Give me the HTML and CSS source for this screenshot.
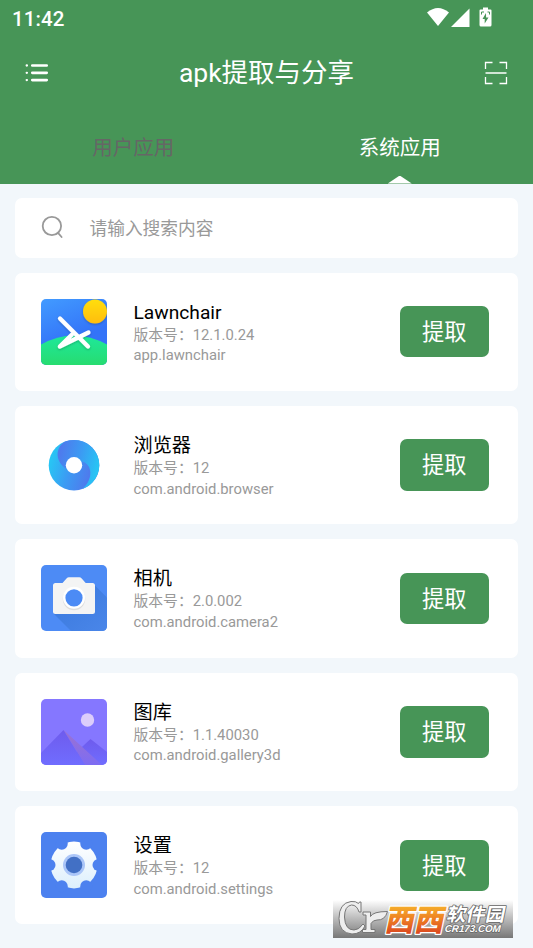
FILE: index.html
```html
<!DOCTYPE html>
<html lang="zh-CN">
<head>
<meta charset="utf-8">
<meta name="viewport" content="width=device-width">
<title>apk提取与分享</title>
<link rel="stylesheet" href="styles.css">
</head>
<body>
<header class="header">
  <div class="status">
    <span class="clock">11:42</span>
    <svg class="status-icons" width="66" height="22" viewBox="0 0 66 22" fill="#fff">
      <path d="M0 5.500Q11 -3.500 22 5.500L11 19Z"/>
      <path d="M42.500 1.500V20H24Z"/>
      <path fill-rule="evenodd" d="M56 .5h5v2h2.500q1 0 1 1V18q0 1.500-1.500 1.500h-9q-1.500 0-1.500-1.500V3.500q0-1 1-1H56ZM59 6l-3.500 6h2.200v4.500L61.500 10.500h-2.400Z"/>
      <path stroke="#479557" stroke-width="1" d="M54.500 7.500V5H57M60.500 5H62.500V7.500" fill="none"/>
    </svg>
  </div>
  <div class="toolbar">
    <svg width="24" height="20" viewBox="0 0 24 20" fill="none" stroke="#fff" stroke-width="2.700" stroke-linecap="round"><path d="M7.300 2.500H21.700M7.300 9.800H21.700M7.300 17.100H21.700"/><path stroke-width="2.300" d="M1.700 2.500h.2M1.700 9.800h.2M1.700 17.100h.2"/></svg>
    <h1 class="title">apk提取与分享</h1>
    <svg width="24" height="24" viewBox="0 0 24 24" fill="none" stroke="#fff" stroke-width="1.300"><path d="M1.500 8V1.500H8.500M15.500 1.500H22.500V8M1.500 16V22.500H8.500M15.500 22.500H22.500V16M1.500 12H22.500"/></svg>
  </div>
  <nav class="tabs">
    <div class="tab">用户应用</div>
    <div class="tab active">系统应用</div>
  </nav>
</header>
<main class="list">
  <div class="search">
    <svg width="24" height="24" viewBox="0 0 24 24" fill="none" stroke="#999" stroke-width="1.800" stroke-linecap="round"><circle cx="10.900" cy="11" r="9.200"/><path d="M16.800 17.700L20.600 22"/></svg>
    <span>请输入搜索内容</span>
  </div>

  <article class="card">
    <svg class="icon" viewBox="0 0 66 66">
      <defs>
        <linearGradient id="sky" x1="0" y1="0" x2=".4" y2="1"><stop stop-color="#429bff"/><stop offset=".7" stop-color="#3373f8"/></linearGradient>
        <linearGradient id="grass" x1="0" y1="0" x2="0" y2="1"><stop stop-color="#1ee89b"/><stop offset="1" stop-color="#27dc70"/></linearGradient>
        <linearGradient id="sun" x1="0" y1="0" x2="0" y2="1"><stop stop-color="#ffde08"/><stop offset="1" stop-color="#ffbd0b"/></linearGradient>
        <clipPath id="tile"><rect width="66" height="66" rx="5"/></clipPath>
        <filter id="soft" x="-30%" y="-30%" width="160%" height="160%"><feDropShadow dx="0" dy="1" stdDeviation="1" flood-opacity=".25"/></filter>
      </defs>
      <g clip-path="url(#tile)">
        <rect width="66" height="66" fill="url(#sky)"/>
        <path d="M0 45.500Q33 27.500 66 45.500V66H0Z" fill="url(#grass)"/>
        <circle cx="54" cy="12.500" r="12" fill="url(#sun)" filter="url(#soft)"/>
        <g fill="none" stroke="#fff" stroke-width="4.200" stroke-linecap="round" stroke-linejoin="round" filter="url(#soft)"><path d="M47.500 33.500L18.800 47.500L31 35.500"/><path d="M19 19.500L47 47.500"/></g>
      </g>
    </svg>
    <div class="info"><h2>Lawnchair</h2><p>版本号：12.1.0.24</p><p>app.lawnchair</p></div>
    <button class="extract">提取</button>
  </article>

  <article class="card">
    <svg class="icon" viewBox="0 0 66 66">
      <defs>
        <linearGradient id="swirlTop" gradientUnits="userSpaceOnUse" x1="18" y1="24" x2="57" y2="34"><stop stop-color="#4e7bed"/><stop offset=".5" stop-color="#3c9af3"/><stop offset="1" stop-color="#28c4f4"/></linearGradient>
        <linearGradient id="swirlBottom" gradientUnits="userSpaceOnUse" x1="9" y1="32" x2="48" y2="43"><stop stop-color="#28c4f4"/><stop offset=".5" stop-color="#3c9af3"/><stop offset="1" stop-color="#4e7bed"/></linearGradient>
      </defs>
      <circle cx="33" cy="33.200" r="25.300" fill="url(#swirlBottom)"/>
      <path d="M33 7.900A25.300 25.300 0 0 1 41.300 57.100C47 52 50.500 45 49 38Q47.500 31 41 29.500L33 33.200L25 37Q18.500 32 17 26C15.500 19 18.500 12.500 24.700 9.300A25.300 25.300 0 0 1 33 7.900Z" fill="url(#swirlTop)"/>
      <circle cx="33" cy="33.200" r="8.200" fill="#fff"/>
    </svg>
    <div class="info"><h2>浏览器</h2><p>版本号：12</p><p>com.android.browser</p></div>
    <button class="extract">提取</button>
  </article>

  <article class="card">
    <svg class="icon" viewBox="0 0 66 66">
      <defs><linearGradient id="cast" x1="0" y1="0" x2="1" y2="1"><stop stop-color="#3978dc"/><stop offset="1" stop-color="#4a86e9"/></linearGradient></defs>
      <rect width="66" height="66" rx="5" fill="#4d8bf5"/>
      <path d="M53 19.500L66 32.500V61q0 5-5 5H30L13 49Z" fill="url(#cast)"/>
      <path d="M14.500 18H21.500L25.500 13.500Q26.500 12.300 28 12.300H38.200Q39.700 12.300 40.700 13.500L44.700 18H51.500Q54 18 54 20.500V46.500Q54 49 51.500 49H14.500Q12 49 12 46.500V20.500Q12 18 14.500 18Z" fill="#f4f4f4"/>
      <circle cx="33" cy="34" r="11.200" fill="#dedede"/><circle cx="33" cy="32.800" r="11" fill="#fff"/><circle cx="33" cy="32.800" r="8.600" fill="#4c8bf5"/>
    </svg>
    <div class="info"><h2>相机</h2><p>版本号：2.0.002</p><p>com.android.camera2</p></div>
    <button class="extract">提取</button>
  </article>

  <article class="card">
    <svg class="icon" viewBox="0 0 66 66">
      <defs>
        <linearGradient id="peak" x1="0" y1="0" x2="0" y2="1"><stop stop-color="#6e5bed"/><stop offset="1" stop-color="#706dff"/></linearGradient>
        <linearGradient id="ridge" x1="0" y1="0" x2="0" y2="1"><stop stop-color="#9c72d0"/><stop offset="1" stop-color="#7d6cf3"/></linearGradient>
      </defs>
      <g clip-path="url(#tile)">
        <rect width="66" height="66" fill="#8577ff"/>
        <circle cx="46.500" cy="21" r="6.700" fill="#dccdfb"/>
        <path d="M28 66V60L49.500 40L66 53V66Z" fill="url(#peak)"/>
        <path d="M22.500 31L61 66H44Z" fill="url(#ridge)"/>
        <path d="M0 54L22.500 31L44 66H0Z" fill="url(#peak)"/>
      </g>
    </svg>
    <div class="info"><h2>图库</h2><p>版本号：1.1.40030</p><p>com.android.gallery3d</p></div>
    <button class="extract">提取</button>
  </article>

  <article class="card">
    <svg class="icon" viewBox="0 0 66 66">
      <defs><linearGradient id="gear" x1="0" y1="0" x2="0" y2="1"><stop stop-color="#fff"/><stop offset="1" stop-color="#dceffc"/></linearGradient></defs>
      <rect width="66" height="66" rx="5" fill="#4c81ef"/>
      <circle cx="33" cy="33" r="23.400" fill="url(#gear)"/>
      <g fill="#4c81ef"><circle cx="57.500" cy="33" r="6"/><circle cx="45.250" cy="54.200" r="6"/><circle cx="20.750" cy="54.200" r="6"/><circle cx="8.500" cy="33" r="6"/><circle cx="20.750" cy="11.800" r="6"/><circle cx="45.250" cy="11.800" r="6"/></g>
      <circle cx="33" cy="33" r="11" fill="#abc6f8"/><circle cx="33" cy="33" r="8.300" fill="#4270c5"/>
    </svg>
    <div class="info"><h2>设置</h2><p>版本号：12</p><p>com.android.settings</p></div>
    <button class="extract">提取</button>
  </article>
</main>
<div class="watermark">
  <svg width="180" height="38" viewBox="0 0 180 38">
    <defs>
      <linearGradient id="shade" x1="0" y1="0" x2="0" y2="1"><stop stop-color="#fff"/><stop offset=".45" stop-color="#c0c0c0"/><stop offset="1" stop-color="#777"/></linearGradient>
      <linearGradient id="orange" x1="0" y1="0" x2="0" y2="1"><stop offset=".2" stop-color="#f6b42c"/><stop offset=".5" stop-color="#ef8424"/><stop offset=".85" stop-color="#dc4a20"/></linearGradient>
    </defs>
    <rect width="180" height="38" fill="url(#shade)"/>
    <g stroke="#777" stroke-width="1" fill="#eee" stroke-linejoin="round">
      <path d="M28 2V12H26Q24 5 18.500 5Q11.500 6 11.500 17Q12 30 21 30Q26 30 30 24L32 26Q28 34 19 34Q6 33 6 18.500Q6 3 18 1.500Q23 1 25.500 3.500L26.500 2Z"/>
      <path d="M30 12H37.500V16.500Q40 11.500 54.500 11.500Q52 20.500 44 20Q40 20 38 23.500V29.500H42V32.500H29.500V29.500H33V15H30Z"/>
    </g>
    <g class="brand" transform="translate(51 30.500) skewX(-12)"><text textLength="59" lengthAdjust="spacingAndGlyphs">西西</text></g>
    <g class="product" transform="translate(113 21) skewX(-12)"><text textLength="58" lengthAdjust="spacingAndGlyphs">软件园</text></g>
    <g class="domain" transform="translate(111.500 32) skewX(-5)"><text textLength="56" lengthAdjust="spacingAndGlyphs">CR173.COM</text></g>
  </svg>
</div>
</body>
</html>
```
FILE: styles.css
```css
* { box-sizing: border-box; }
body {
  margin: 0;
  height: 948px;
  overflow: hidden;
  position: relative;
  background: #f2f7fb;
  font-family: Roboto, "Noto Sans CJK SC", sans-serif;
}
svg { display: block; flex: none; }
h1, h2, p { margin: 0; font-weight: 400; }

.header { height: 183.5px; background: #479557; color: #fff; }
.status {
  height: 36px;
  padding: 0 40px 0 12px;
  display: flex;
  align-items: center;
  justify-content: space-between;
}
.clock { padding-top: 1px; font-size: 20.5px; font-weight: 500; line-height: 36px; letter-spacing: .1px; }
.status-icons { margin-top: -1px; }
.toolbar {
  height: 73px;
  padding: 0 25px;
  display: flex;
  align-items: center;
  justify-content: space-between;
}
.title { padding-top: 1px; font-size: 26.5px; line-height: 36px; }
.tabs { height: 74.5px; display: flex; }
.tab {
  flex: 1;
  position: relative;
  text-align: center;
  font-size: 20.5px;
  line-height: 79px;
  height: 74.5px;
  color: #666;
}
.tab.active { color: #fff; }
.tab.active::after {
  content: "";
  position: absolute;
  left: 50%;
  bottom: 0;
  width: 24px;
  height: 8px;
  margin-left: -12px;
  background: #fff;
  clip-path: polygon(50% 0, 100% 100%, 0 100%);
}

.list { padding: 14.5px 15px; display: flex; flex-direction: column; gap: 15px; }
.search {
  height: 59.5px;
  flex: none;
  padding: 0 0 1px 25.5px;
  display: flex;
  align-items: center;
  gap: 25px;
  border-radius: 7px;
  background: #fff;
  color: #999;
  font-size: 17.7px;
}
.card {
  height: 118.4px;
  flex: none;
  padding: 0 29.5px 0 26px;
  display: flex;
  align-items: center;
  border-radius: 7px;
  background: #fff;
}
.icon { width: 66px; height: 66px; }
.info { flex: 1; margin-left: 26.5px; padding-top: 3px; color: #999; }
.info h2 { color: #000; font-size: 19.2px; line-height: 24px; }
.info p { font-size: 14.8px; line-height: 20.5px; }
.extract {
  width: 88.5px;
  height: 51.5px;
  padding: 0;
  border: 0;
  border-radius: 7px;
  background: #479557;
  color: #fff;
  font: 22.2px/52px Roboto, "Noto Sans CJK SC", sans-serif;
}

.watermark { position: absolute; left: 333px; top: 900px; }
.watermark svg { overflow: visible; }
.watermark text {
  font-family: "Noto Sans CJK SC", sans-serif;
  font-weight: 900;
  paint-order: stroke;
  stroke-linejoin: round;
}
.brand text { font-size: 30px; fill: url(#orange); stroke: #fff; stroke-width: 2.5px; }
.product text { font-size: 18.5px; font-weight: 700; fill: #fff; stroke: #666; stroke-width: 1.6px; }
.domain text { font-family: "Liberation Sans", sans-serif; font-size: 10px; font-weight: 700; font-style: italic; fill: #fff; stroke: #666; stroke-width: 1.4px; }
```
